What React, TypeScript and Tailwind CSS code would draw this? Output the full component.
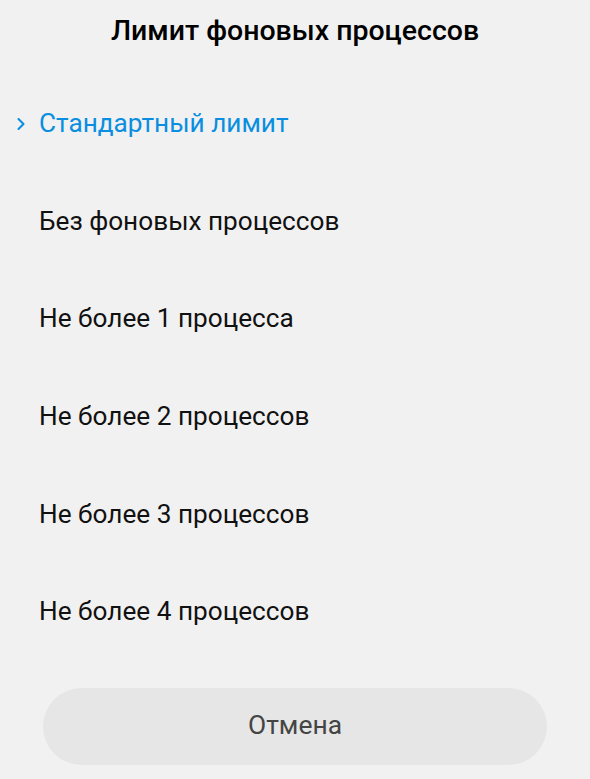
import { ChevronRight } from "lucide-react";

const options = [
  "Стандартный лимит",
  "Без фоновых процессов",
  "Не более 1 процесса",
  "Не более 2 процессов",
  "Не более 3 процессов",
  "Не более 4 процессов",
];

export default function App() {
  const selected = 0;

  return (
    <div className="flex h-[779px] w-[590px] flex-col bg-[#f1f1f1] font-['Roboto',sans-serif]">
      <div className="flex h-[62px] items-center justify-center">
        <h1 className="text-[28.5px] font-medium text-black">Лимит фоновых процессов</h1>
      </div>

      <ul className="mt-[13px] flex flex-col">
        {options.map((label, index) => {
          const active = index === selected;
          return (
            <li key={label} className="relative flex h-[97.6px] items-center pl-[39px]">
              {active && (
                <ChevronRight
                  className="absolute left-[11px] h-[20px] w-[20px] text-[#0a8ee0]"
                  strokeWidth={2.5}
                />
              )}
              <span
                className={
                  active ? "text-[26.2px] text-[#0a8ee0]" : "text-[26.2px] text-[#111111]"
                }
              >
                {label}
              </span>
            </li>
          );
        })}
      </ul>

      <div className="mt-[27px] px-[43px]">
        <button
          type="button"
          className="flex h-[77px] w-full items-center justify-center rounded-full bg-[#e6e6e6] text-[26.4px] text-[#444444]"
        >
          Отмена
        </button>
      </div>
    </div>
  );
}
